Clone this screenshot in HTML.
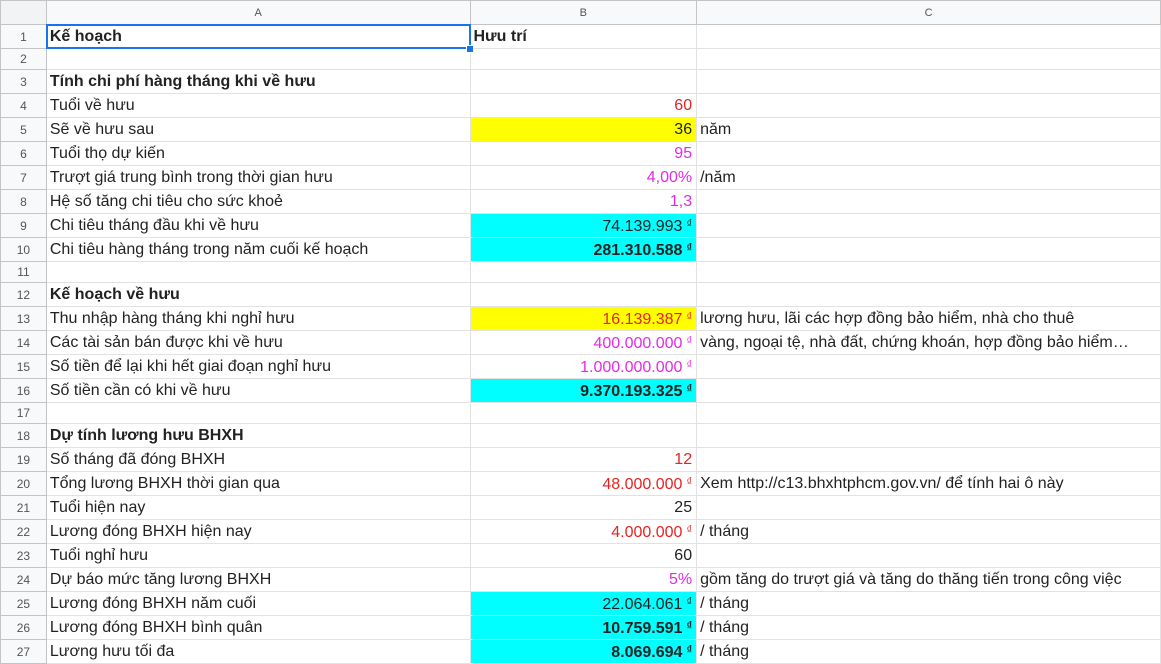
<!DOCTYPE html><html><head><meta charset="utf-8"><style>
body{margin:0;width:1161px;height:664px;overflow:hidden;background:#fff;font-family:"Liberation Sans",Arial,sans-serif;}
table{border-collapse:collapse;table-layout:fixed;position:absolute;left:0;top:0}
td{border:1px solid #e2e2e2;padding:0 4px 0 3px;font-size:16px;color:#222;white-space:nowrap;overflow:hidden;line-height:18px}
td.h{background:#f8f9fa;color:#555;font-size:12px;text-align:center;border-color:#c4c4c4;padding:0}
tr td{height:23px}
tr.s td{height:20px}
td.b{font-weight:bold}
td.r{text-align:right}
.red{color:#e8231f}.mag{color:#e52ae5}
.cy{background:#00ffff}.ye{background:#ffff00}
sup{font-size:11px;vertical-align:4px;margin-left:4px}
.sel{position:absolute;left:46px;top:24px;width:421px;height:21px;border:2px solid #1a73e8}
.hnd{position:absolute;left:466px;top:45px;width:6px;height:6px;background:#1a73e8;border:1px solid #fff}
</style></head><body>
<table>
<colgroup><col style="width:46px"><col style="width:424px"><col style="width:227px"><col style="width:464px"></colgroup>
<tr><td class="h" style="background:#f1f3f4"></td><td class="h" style="font-size:11px">A</td><td class="h" style="font-size:11px">B</td><td class="h" style="font-size:11px">C</td></tr>
<tr><td class="h">1</td><td class="b">Kế hoạch</td><td class="b">Hưu trí</td><td></td></tr>
<tr class="s"><td class="h">2</td><td></td><td></td><td></td></tr>
<tr><td class="h">3</td><td class="b">Tính chi phí hàng tháng khi về hưu</td><td></td><td></td></tr>
<tr><td class="h">4</td><td>Tuổi về hưu</td><td class="r red">60</td><td></td></tr>
<tr><td class="h">5</td><td>Sẽ về hưu sau</td><td class="r ye">36</td><td>năm</td></tr>
<tr><td class="h">6</td><td>Tuổi thọ dự kiến</td><td class="r mag">95</td><td></td></tr>
<tr><td class="h">7</td><td>Trượt giá trung bình trong thời gian hưu</td><td class="r mag">4,00%</td><td>/năm</td></tr>
<tr><td class="h">8</td><td>Hệ số tăng chi tiêu cho sức khoẻ</td><td class="r mag">1,3</td><td></td></tr>
<tr><td class="h">9</td><td>Chi tiêu tháng đầu khi về hưu</td><td class="r cy">74.139.993<sup>₫</sup></td><td></td></tr>
<tr><td class="h">10</td><td>Chi tiêu hàng tháng trong năm cuối kế hoạch</td><td class="r cy b">281.310.588<sup>₫</sup></td><td></td></tr>
<tr class="s"><td class="h">11</td><td></td><td></td><td></td></tr>
<tr><td class="h">12</td><td class="b">Kế hoạch về hưu</td><td></td><td></td></tr>
<tr><td class="h">13</td><td>Thu nhập hàng tháng khi nghỉ hưu</td><td class="r ye red">16.139.387<sup>₫</sup></td><td>lương hưu, lãi các hợp đồng bảo hiểm, nhà cho thuê</td></tr>
<tr><td class="h">14</td><td>Các tài sản bán được khi về hưu</td><td class="r mag">400.000.000<sup>₫</sup></td><td>vàng, ngoại tệ, nhà đất, chứng khoán, hợp đồng bảo hiểm…</td></tr>
<tr><td class="h">15</td><td>Số tiền để lại khi hết giai đoạn nghỉ hưu</td><td class="r mag">1.000.000.000<sup>₫</sup></td><td></td></tr>
<tr><td class="h">16</td><td>Số tiền cần có khi về hưu</td><td class="r cy b">9.370.193.325<sup>₫</sup></td><td></td></tr>
<tr class="s"><td class="h">17</td><td></td><td></td><td></td></tr>
<tr><td class="h">18</td><td class="b">Dự tính lương hưu BHXH</td><td></td><td></td></tr>
<tr><td class="h">19</td><td>Số tháng đã đóng BHXH</td><td class="r red">12</td><td></td></tr>
<tr><td class="h">20</td><td>Tổng lương BHXH thời gian qua</td><td class="r red">48.000.000<sup>₫</sup></td><td>Xem http://c13.bhxhtphcm.gov.vn/ để tính hai ô này</td></tr>
<tr><td class="h">21</td><td>Tuổi hiện nay</td><td class="r">25</td><td></td></tr>
<tr><td class="h">22</td><td>Lương đóng BHXH hiện nay</td><td class="r red">4.000.000<sup>₫</sup></td><td>/ tháng</td></tr>
<tr><td class="h">23</td><td>Tuổi nghỉ hưu</td><td class="r">60</td><td></td></tr>
<tr><td class="h">24</td><td>Dự báo mức tăng lương BHXH</td><td class="r mag">5%</td><td>gồm tăng do trượt giá và tăng do thăng tiến trong công việc</td></tr>
<tr><td class="h">25</td><td>Lương đóng BHXH năm cuối</td><td class="r cy">22.064.061<sup>₫</sup></td><td>/ tháng</td></tr>
<tr><td class="h">26</td><td>Lương đóng BHXH bình quân</td><td class="r cy b">10.759.591<sup>₫</sup></td><td>/ tháng</td></tr>
<tr><td class="h">27</td><td>Lương hưu tối đa</td><td class="r cy b">8.069.694<sup>₫</sup></td><td>/ tháng</td></tr>
</table>
<div class="sel"></div><div class="hnd"></div>
</body></html>
